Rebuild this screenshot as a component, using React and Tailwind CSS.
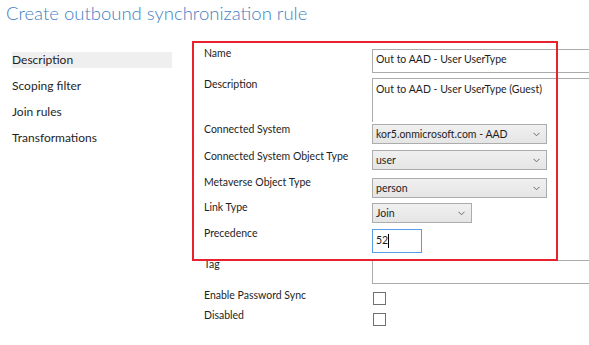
import React from 'react';

const font = { fontFamily: '"Segoe UI", Lato, sans-serif' };

function Chevron() {
  return (
    <svg width="7" height="5" viewBox="0 0 7 5" className="absolute right-[6px] top-[7px]">
      <path d="M0.5 0.8 L3.5 3.8 L6.5 0.8" fill="none" stroke="#6a6a6a" strokeWidth="1" />
    </svg>
  );
}

function Select({ value, width }) {
  return (
    <div
      className={`relative h-[20px] ${width} border border-[#acacac] bg-gradient-to-b from-[#f0f0f0] to-[#e5e5e5] pl-[3px] text-[10.5px] leading-[18px] text-[#1e1e1e]`}
    >
      {value}
      <Chevron />
    </div>
  );
}

function Row({ label, height, offset, children }) {
  return (
    <div className={`flex items-start ${height}`}>
      <div className="w-[168px] shrink-0 text-[10.5px] leading-[16px] text-[#1e1e1e]">{label}</div>
      <div className={offset}>{children}</div>
    </div>
  );
}

export default function App() {
  const nav = ['Description', 'Scoping filter', 'Join rules', 'Transformations'];
  return (
    <div className="relative h-[345px] w-[589px] overflow-hidden bg-white" style={font}>
      <h1 className="pl-[6px] pt-[1px] text-[18.5px] font-light leading-[24px] text-[#3f7fc4]">
        Create outbound synchronization rule
      </h1>

      <div className="flex">
        <nav className="ml-[12px] mt-[27px] flex w-[160px] shrink-0 flex-col gap-[10px]">
          {nav.map((n, i) => (
            <div
              key={n}
              className={`h-[16px] text-[12px] leading-[16px] text-[#1e1e1e] ${i === 0 ? 'bg-[#efefef]' : ''}`}
            >
              {n}
            </div>
          ))}
        </nav>

        <div className="ml-[32px] mt-[20px] flex min-w-0 flex-1 flex-col">
          <Row label="Name" height="h-[31px]" offset="mt-[4px]">
            <div className="h-[24px] w-[230px] border border-[#ababab] pl-[3px] pt-[1px] text-[10.5px] leading-[16px] text-[#1e1e1e]">
              Out to AAD - User UserType
            </div>
          </Row>
          <Row label="Description" height="h-[45px]" offset="mt-[2px]">
            <div className="h-[44px] w-[230px] border-l border-t border-[#ababab] pl-[3px] pt-[2px] text-[10.5px] leading-[16px] text-[#1e1e1e]">
              Out to AAD - User UserType (Guest)
            </div>
          </Row>
          <Row label="Connected System" height="h-[27px]" offset="mt-[3px]">
            <Select value="kor5.onmicrosoft.com - AAD" width="w-[175px]" />
          </Row>
          <Row label="Connected System Object Type" height="h-[26px]" offset="mt-[2px]">
            <Select value="user" width="w-[175px]" />
          </Row>
          <Row label="Metaverse Object Type" height="h-[25px]" offset="mt-[4px]">
            <Select value="person" width="w-[175px]" />
          </Row>
          <Row label="Link Type" height="h-[26px]" offset="mt-[4px]">
            <Select value="Join" width="w-[100px]" />
          </Row>
          <Row label="Precedence" height="h-[31px]" offset="mt-[4px]">
            <div className="flex h-[24px] w-[50px] items-center border border-[#569de5] pl-[3px] text-[10.5px] text-[#1e1e1e]">
              52<span className="inline-block h-[14px] w-px bg-black" />
            </div>
          </Row>
          <Row label="Tag" height="h-[31px]" offset="mt-[4px]">
            <div className="h-[24px] w-[230px] border border-[#ababab]" />
          </Row>
          <Row label="Enable Password Sync" height="h-[20px]" offset="mt-[5px] ml-[1px]">
            <div className="h-[13px] w-[13px] border border-[#707070] bg-white" />
          </Row>
          <Row label="Disabled" height="h-[24px]" offset="mt-[6px] ml-[1px]">
            <div className="h-[13px] w-[13px] border border-[#707070] bg-white" />
          </Row>
        </div>
      </div>

      <div className="pointer-events-none absolute left-[192px] top-[41px] h-[220px] w-[366px] border-[2px] border-[#e8212c]" />
    </div>
  );
}
